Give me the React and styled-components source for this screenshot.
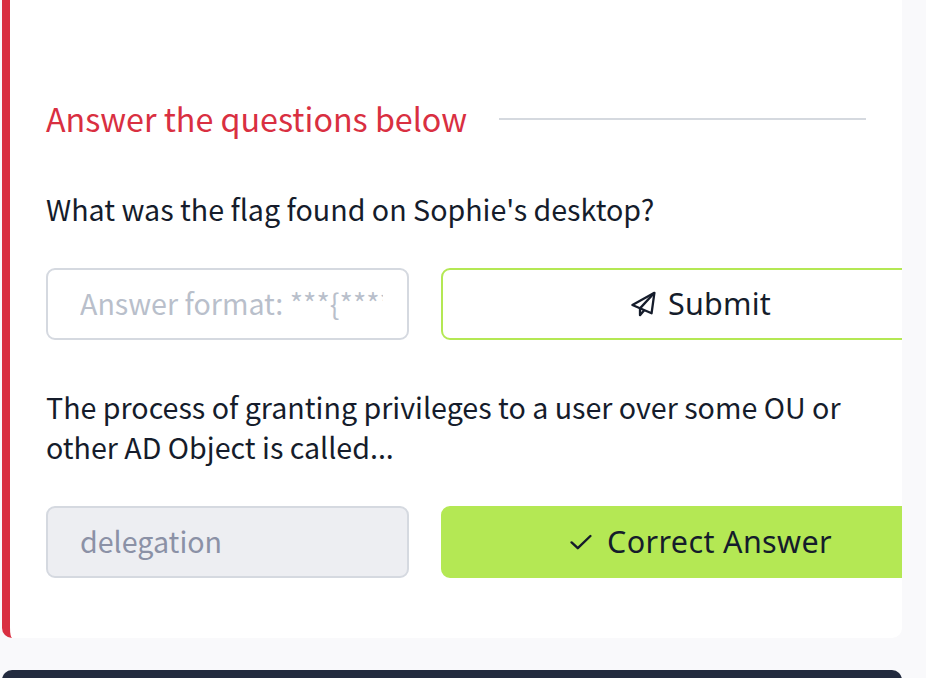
import React from 'react';
import styled, { createGlobalStyle } from 'styled-components';

const GlobalStyle = createGlobalStyle`
  * { box-sizing: border-box; }
  body {
    margin: 0;
    background: #f9f9fb;
    overflow: hidden;
    font-family: "Noto Sans CJK SC", "Noto Sans", sans-serif;
    color: #151c2b;
  }
`;

const Page = styled.main`
  height: 678px;
  padding: 0 24px 0 2px;
  overflow: hidden;
  background: #f9f9fb;
`;

const Card = styled.section`
  height: 638px;
  padding: 97px 36px 0;
  border-left: 8px solid #d92f41;
  border-radius: 0 0 10px 10px;
  background: #fff;
  overflow: hidden;
`;

const NextCard = styled.section`
  height: 80px;
  margin-top: 32px;
  border-radius: 10px;
  background: #232b3f;
`;

const Heading = styled.div`
  display: flex;
  align-items: center;
  gap: 32px;
  height: 44px;
`;

const Title = styled.h2`
  margin: 0;
  padding-bottom: 2px;
  font-size: 32.25px;
  font-weight: 400;
  line-height: 42px;
  color: #d92f41;
  white-space: nowrap;
`;

const Rule = styled.span`
  flex: 1;
  height: 2px;
  background: #d5d9df;
`;

const Question = styled.p`
  margin: ${(p) => p.$top}px 0 39px;
  font-size: 28.64px;
  line-height: 40px;
  white-space: nowrap;
`;

const AnswerRow = styled.div`
  display: grid;
  grid-template-columns: 363px 520px;
  gap: 32px;
  height: 72px;
`;

const AnswerInput = styled.input`
  width: 100%;
  height: 72px;
  padding: 0 24px 4px 32px;
  border: 2px solid #d5d9e0;
  border-radius: 9px;
  outline: none;
  background: #fff;
  font: 400 28.64px "Noto Sans CJK SC", "Noto Sans", sans-serif;

  &::placeholder { color: #b9bfcb; opacity: 1; }
  &:disabled { background: #edeef2; color: #8b91a6; }
`;

const Button = styled.button`
  display: flex;
  align-items: center;
  justify-content: center;
  gap: ${(p) => p.$gap}px;
  height: 72px;
  padding: 0;
  border: 2px solid #b4e854;
  border-radius: 9px;
  background: ${(p) => (p.$filled ? '#b4e854' : '#fff')};
  color: #151c2b;
  font: 400 30.5px "Noto Sans", sans-serif;
  white-space: nowrap;
`;

const Label = styled.span`
  padding-bottom: 2px;
  letter-spacing: ${(p) => p.$tracking}px;
`;

const PlaneIcon = () => (
  <svg width="26" height="26" viewBox="0 0 26 26" fill="none" stroke="currentColor" strokeWidth="2.3" strokeLinejoin="round">
    <path d="M23.4 1.8 1.4 14 20.6 22.2Z" />
    <path d="M23.4 1.8 9 17.4V24.2L13.2 19.2" />
  </svg>
);

const CheckIcon = () => (
  <svg width="22" height="16" viewBox="0 0 22 16" fill="none" stroke="currentColor" strokeWidth="2.4" strokeLinecap="round" strokeLinejoin="round">
    <path d="M1.6 8.4 7.8 14.2 20.4 2" />
  </svg>
);

export default function App() {
  return (
    <>
      <GlobalStyle />
      <Page>
        <Card>
          <Heading>
            <Title>Answer the questions below</Title>
            <Rule />
          </Heading>
          <Question $top={48}>What was the flag found on Sophie's desktop?</Question>
          <AnswerRow>
            <AnswerInput placeholder="Answer format: ***{***************}" />
            <Button $gap={11}>
              <PlaneIcon />
              <Label $tracking={0.2}>Submit</Label>
            </Button>
          </AnswerRow>
          <Question $top={47}>
            The process of granting privileges to a user over some OU or
            <br />
            other AD Object is called...
          </Question>
          <AnswerRow>
            <AnswerInput disabled defaultValue="delegation" />
            <Button $filled $gap={15}>
              <CheckIcon />
              <Label $tracking={0.36}>Correct Answer</Label>
            </Button>
          </AnswerRow>
        </Card>
        <NextCard />
      </Page>
    </>
  );
}
